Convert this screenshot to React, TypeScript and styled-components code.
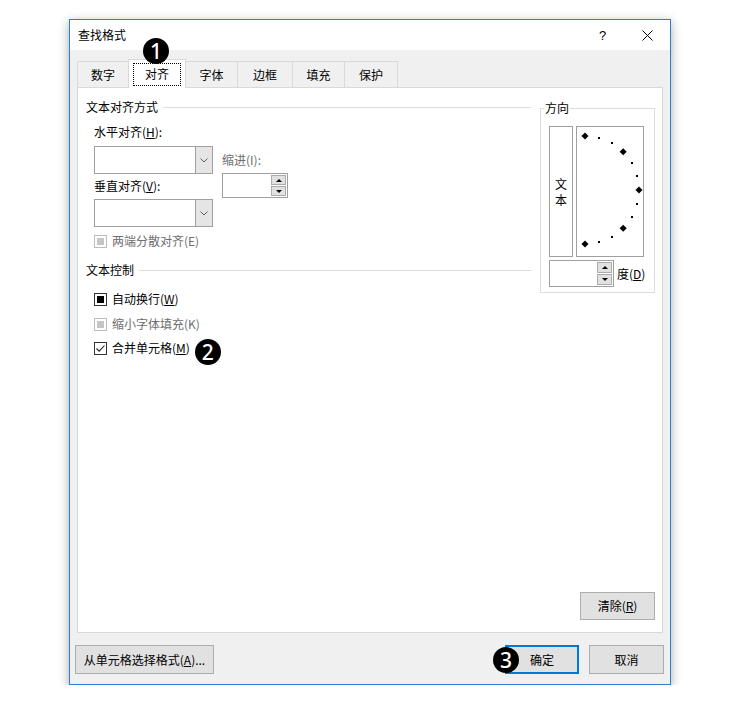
import React from 'react';
import styled, { createGlobalStyle } from 'styled-components';

const GlobalStyle = createGlobalStyle`
  body {
    margin: 0;
    background: #fff;
    font-family: "Noto Sans CJK SC", "Noto Sans", sans-serif;
    font-size: 12px;
    color: #000;
  }
`;

const tabs = [
  { name: '数字', w: 52 },
  { name: '对齐', w: 58, active: true },
  { name: '字体', w: 53 },
  { name: '边框', w: 56 },
  { name: '填充', w: 53 },
  { name: '保护', w: 54 },
];

// dial dots: center at left middle, every 15 degrees
const dialDots = Array.from({ length: 13 }, (_, i) => {
  const deg = -90 + i * 15;
  const rad = (deg * Math.PI) / 180;
  return { x: 8 + 54 * Math.cos(rad), y: 63 + 54 * Math.sin(rad), big: deg % 45 === 0 };
});

function Spin({ w, h }: { w: number; h: number }) {
  return (
    <SpinBox $w={w} $h={h}>
      <SpinCol>
        <SpinBtn><Tri $up /></SpinBtn>
        <SpinBtn><Tri /></SpinBtn>
      </SpinCol>
    </SpinBox>
  );
}

function Combo() {
  return (
    <ComboBox>
      <ComboField />
      <ComboArrow>
        <svg width="8" height="5" viewBox="0 0 8 5">
          <path d="M0.5 0.5 L4 4 L7.5 0.5" fill="none" stroke="#606060" strokeWidth="1" />
        </svg>
      </ComboArrow>
    </ComboBox>
  );
}

export default function App() {
  return (
    <Page>
      <GlobalStyle />
      <Dialog>
        <TitleBar>
          <Title>查找格式</Title>
          <CaptionButton>?</CaptionButton>
          <CaptionButton>
            <svg width="11" height="11" viewBox="0 0 11 11">
              <path d="M0.5 0.5 L10.5 10.5 M10.5 0.5 L0.5 10.5" stroke="#000" strokeWidth="1" />
            </svg>
          </CaptionButton>
        </TitleBar>
        <Body>
          <TabRow>
            {tabs.map((t) => (
              <Tab key={t.name} $w={t.w} $active={t.active}>
                {t.active ? (
                  <>
                    <FocusText>{t.name}</FocusText>
                    <Badge $left={14} $top={-22}>1</Badge>
                  </>
                ) : (
                  t.name
                )}
              </Tab>
            ))}
          </TabRow>
          <Panel>
            <TopArea>
              <LeftCol>
                <SectionHeader>
                  <span>文本对齐方式</span>
                  <HeaderLine />
                </SectionHeader>
                <SubBlock>
                  <AlignRow>
                    <AlignStack>
                      <FieldLabel>水平对齐(<U>H</U>):</FieldLabel>
                      <ComboWrap $gap={6}><Combo /></ComboWrap>
                      <FieldLabel $gap={4}>垂直对齐(<U>V</U>):</FieldLabel>
                      <ComboWrap $gap={5}><Combo /></ComboWrap>
                    </AlignStack>
                    <IndentStack>
                      <FieldLabel $disabled>缩进(I):</FieldLabel>
                      <ComboWrap $gap={5}><Spin w={66} h={25} /></ComboWrap>
                    </IndentStack>
                  </AlignRow>
                  <CheckRow $gap={6} $disabled>
                    <CheckBox $state="disabled" />
                    两端分散对齐(E)
                  </CheckRow>
                </SubBlock>
                <SectionHeader $gap={13}>
                  <span>文本控制</span>
                  <HeaderLine />
                </SectionHeader>
                <SubBlock>
                  <CheckRow $gap={13}>
                    <CheckBox $state="mixed" />
                    自动换行(<U>W</U>)
                  </CheckRow>
                  <CheckRow $gap={9} $disabled>
                    <CheckBox $state="disabled" />
                    缩小字体填充(K)
                  </CheckRow>
                  <CheckRow $gap={8}>
                    <CheckBox $state="checked">
                      <svg width="11" height="11" viewBox="0 0 11 11">
                        <path d="M1.5 5.5 L4.2 8.2 L9.5 2.5" fill="none" stroke="#222" strokeWidth="1.1" />
                      </svg>
                    </CheckBox>
                    合并单元格(<U>M</U>)
                    <InlineBadge>2</InlineBadge>
                  </CheckRow>
                </SubBlock>
              </LeftCol>
              <OrientBox>
                <Legend>方向</Legend>
                <DialRow>
                  <VerticalText>
                    <span>文</span>
                    <span>本</span>
                  </VerticalText>
                  <DialBox>
                    <svg width="66" height="129" viewBox="0 0 66 129">
                      {dialDots.map((d, i) =>
                        d.big ? (
                          <rect
                            key={i}
                            x={d.x - 2.5}
                            y={d.y - 2.5}
                            width="5"
                            height="5"
                            fill="#000"
                            transform={`rotate(45 ${d.x} ${d.y})`}
                          />
                        ) : (
                          <rect key={i} x={Math.round(d.x) - 1} y={Math.round(d.y) - 1} width="2" height="2" fill="#000" />
                        )
                      )}
                    </svg>
                  </DialBox>
                </DialRow>
                <DegreeRow>
                  <Spin w={65} h={27} />
                  <DegreeLabel>度(<U>D</U>)</DegreeLabel>
                </DegreeRow>
              </OrientBox>
            </TopArea>
            <PanelFooter>
              <Button $w={75} $h={28}>清除(<U>R</U>)</Button>
            </PanelFooter>
          </Panel>
          <Footer>
            <Button $w={139} $h={29}>从单元格选择格式(<U>A</U>)...</Button>
            <Spacer />
            <Button $w={74} $h={29} $default>
              确定
              <Badge $left={-14} $top={0}>3</Badge>
            </Button>
            <Button $w={75} $h={29} $gap={10}>取消</Button>
          </Footer>
        </Body>
      </Dialog>
    </Page>
  );
}

const Page = styled.div`
  padding: 19px 0 0 69px;
`;

const Dialog = styled.div`
  position: relative;
  width: 602px;
  height: 666px;
  box-sizing: border-box;
  border: 1px solid #2b7fd3;
  background: #f0f0f0;
  box-shadow: 0 3px 10px rgba(0, 0, 0, 0.35);
  display: flex;
  flex-direction: column;
`;

const TitleBar = styled.div`
  height: 30px;
  background: #fff;
  display: flex;
  align-items: center;
  padding-left: 8px;
`;

const Title = styled.div`
  flex: 1;
  line-height: 16px;
`;

const CaptionButton = styled.div`
  width: 45px;
  height: 30px;
  display: flex;
  align-items: center;
  justify-content: center;
  font-family: "Liberation Sans", sans-serif;
  font-size: 13px;
`;

const Body = styled.div`
  flex: 1;
  display: flex;
  flex-direction: column;
  padding: 9px 7px 0;
`;

const TabRow = styled.div`
  display: flex;
  align-items: flex-end;
  height: 28px;
  position: relative;
  z-index: 1;
`;

const Tab = styled.div<{ $w: number; $active?: boolean }>`
  position: relative;
  box-sizing: border-box;
  width: ${(p) => p.$w}px;
  height: ${(p) => (p.$active ? 29 : 26)}px;
  margin-bottom: ${(p) => (p.$active ? -1 : 0)}px;
  margin-left: -1px;
  &:first-child {
    margin-left: 0;
  }
  border: 1px solid #d9d9d9;
  border-bottom: none;
  background: ${(p) => (p.$active ? '#fff' : '#f0f0f0')};
  z-index: ${(p) => (p.$active ? 2 : 1)};
  display: flex;
  align-items: center;
  justify-content: center;
  line-height: 16px;
`;

const FocusText = styled.span`
  display: inline-block;
  border: 1px dotted #000;
  padding: 2px 11px 3px;
  line-height: 16px;
`;

const Badge = styled.div<{ $left: number; $top: number }>`
  position: absolute;
  left: ${(p) => p.$left}px;
  top: ${(p) => p.$top}px;
  width: 26px;
  height: 26px;
  border-radius: 50%;
  background: #000;
  color: #fff;
  font-family: "Noto Sans", sans-serif;
  font-size: 21px;
  font-weight: 500;
  line-height: 26px;
  text-align: center;
  z-index: 3;
`;

const InlineBadge = styled.span`
  position: relative;
  top: 4px;
  margin-left: 5px;
  width: 26px;
  height: 26px;
  border-radius: 50%;
  background: #000;
  color: #fff;
  font-family: "Noto Sans", sans-serif;
  font-size: 21px;
  font-weight: 500;
  line-height: 26px;
  text-align: center;
`;

const Panel = styled.div`
  flex: 1;
  background: #fff;
  border: 1px solid #d9d9d9;
  display: flex;
  flex-direction: column;
  padding: 11px 7px 12px 8px;
`;

const TopArea = styled.div`
  display: flex;
  justify-content: space-between;
  align-items: flex-start;
`;

const LeftCol = styled.div`
  width: 445px;
  display: flex;
  flex-direction: column;
`;

const SectionHeader = styled.div<{ $gap?: number }>`
  display: flex;
  align-items: center;
  height: 16px;
  line-height: 16px;
  margin-top: ${(p) => p.$gap ?? 0}px;
`;

const HeaderLine = styled.div`
  flex: 1;
  height: 1px;
  background: #dcdcdc;
  margin-left: 5px;
`;

const SubBlock = styled.div`
  display: flex;
  flex-direction: column;
  padding-left: 8px;
`;

const AlignRow = styled.div`
  display: flex;
  gap: 9px;
  margin-top: 9px;
`;

const AlignStack = styled.div`
  display: flex;
  flex-direction: column;
`;

const IndentStack = styled.div`
  display: flex;
  flex-direction: column;
  margin-top: 28px;
`;

const FieldLabel = styled.div<{ $gap?: number; $disabled?: boolean }>`
  line-height: 16px;
  margin-top: ${(p) => p.$gap ?? 0}px;
  color: ${(p) => (p.$disabled ? '#6d6d6d' : '#000')};
`;

const ComboWrap = styled.div<{ $gap: number }>`
  margin-top: ${(p) => p.$gap}px;
`;

const ComboBox = styled.div`
  width: 119px;
  height: 28px;
  box-sizing: border-box;
  border: 1px solid #a0a0a0;
  display: flex;
  background: #fff;
`;

const ComboField = styled.div`
  flex: 1;
`;

const ComboArrow = styled.div`
  width: 16px;
  border-left: 1px solid #a0a0a0;
  background: #e5e5e5;
  display: flex;
  align-items: center;
  justify-content: center;
`;

const SpinBox = styled.div<{ $w: number; $h: number }>`
  width: ${(p) => p.$w}px;
  height: ${(p) => p.$h}px;
  flex-shrink: 0;
  box-sizing: border-box;
  border: 1px solid #a0a0a0;
  background: #fff;
  display: flex;
  justify-content: flex-end;
  padding: 1px;
`;

const SpinCol = styled.div`
  width: 15px;
  display: flex;
  flex-direction: column;
  gap: 1px;
`;

const SpinBtn = styled.div`
  flex: 1;
  box-sizing: border-box;
  border: 1px solid #acacac;
  background: #e1e1e1;
  display: flex;
  align-items: center;
  justify-content: center;
`;

const Tri = styled.div<{ $up?: boolean }>`
  width: 0;
  height: 0;
  border-left: 3px solid transparent;
  border-right: 3px solid transparent;
  ${(p) => (p.$up ? 'border-bottom: 3px solid #000;' : 'border-top: 3px solid #000;')}
`;

const CheckRow = styled.div<{ $gap: number; $disabled?: boolean }>`
  display: flex;
  align-items: center;
  height: 16px;
  line-height: 16px;
  margin-top: ${(p) => p.$gap}px;
  color: ${(p) => (p.$disabled ? '#6d6d6d' : '#000')};
`;

const CheckBox = styled.div<{ $state: 'disabled' | 'mixed' | 'checked' }>`
  width: 13px;
  height: 13px;
  box-sizing: border-box;
  border: 1px solid ${(p) => (p.$state === 'disabled' ? '#bcbcbc' : '#333')};
  background: #fff;
  margin-right: 5px;
  display: flex;
  align-items: center;
  justify-content: center;
  &::after {
    content: '';
    display: ${(p) => (p.$state === 'checked' ? 'none' : 'block')};
    width: 7px;
    height: 7px;
    background: ${(p) => (p.$state === 'disabled' ? '#c6c6c6' : '#000')};
  }
`;

const U = styled.span`
  text-decoration: underline;
  text-underline-offset: 1px;
`;

const OrientBox = styled.fieldset`
  margin: 1px 0 0;
  width: 115px;
  min-width: 0;
  box-sizing: border-box;
  border: 1px solid #dcdcdc;
  padding: 10px 10px 5px 8px;
`;

const Legend = styled.legend`
  padding: 0 1px;
  margin-left: -5px;
  line-height: 16px;
`;

const DialRow = styled.div`
  display: flex;
  gap: 3px;
`;

const VerticalText = styled.div`
  width: 24px;
  height: 131px;
  box-sizing: border-box;
  border: 1px solid #a0a0a0;
  display: flex;
  flex-direction: column;
  align-items: center;
  justify-content: center;
  line-height: 16px;
`;

const DialBox = styled.div`
  width: 68px;
  height: 131px;
  box-sizing: border-box;
  border: 1px solid #a0a0a0;
  svg {
    display: block;
  }
`;

const DegreeRow = styled.div`
  display: flex;
  align-items: center;
  margin-top: 3px;
  white-space: nowrap;
`;

const DegreeLabel = styled.span`
  margin-left: 3px;
  line-height: 16px;
  white-space: nowrap;
`;

const PanelFooter = styled.div`
  margin-top: auto;
  display: flex;
  justify-content: flex-end;
`;

const Button = styled.div<{ $w: number; $h: number; $default?: boolean; $gap?: number }>`
  position: relative;
  width: ${(p) => p.$w}px;
  height: ${(p) => p.$h}px;
  margin-left: ${(p) => p.$gap ?? 0}px;
  box-sizing: border-box;
  border: ${(p) => (p.$default ? '2px solid #0078d7' : '1px solid #adadad')};
  background: #e1e1e1;
  display: flex;
  align-items: center;
  justify-content: center;
  line-height: 16px;
`;

const Footer = styled.div`
  height: 51px;
  box-sizing: border-box;
  display: flex;
  align-items: flex-start;
  margin: 0 -1px 0 -2px;
  padding-top: 12px;
`;

const Spacer = styled.div`
  flex: 1;
`;
